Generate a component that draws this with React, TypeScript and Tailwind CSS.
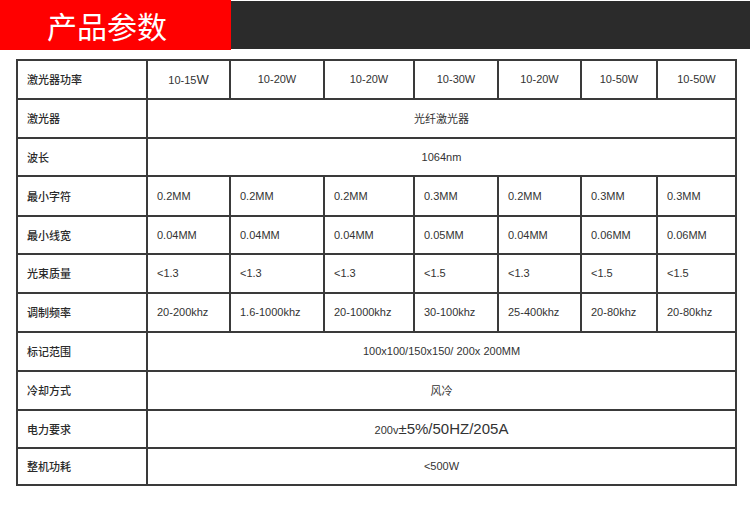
const widths = [130, 83, 94, 90, 84, 83, 76, 79];
const heights = [39, 39, 38, 40, 38, 39, 39, 39, 39, 38, 37];

const latin = "font-['Liberation_Sans','Noto_Sans_CJK_SC',sans-serif]";
const cjk = "font-['Noto_Sans_CJK_SC',sans-serif]";

type Row = { label: string; cells?: string[]; merged?: React.ReactNode };

const rows: Row[] = [
  { label: "激光器功率", cells: ["10-15W", "10-20W", "10-20W", "10-30W", "10-20W", "10-50W", "10-50W"] },
  { label: "激光器", merged: <span className={cjk}>光纤激光器</span> },
  { label: "波长", merged: "1064nm" },
  { label: "最小字符", cells: ["0.2MM", "0.2MM", "0.2MM", "0.3MM", "0.2MM", "0.3MM", "0.3MM"] },
  { label: "最小线宽", cells: ["0.04MM", "0.04MM", "0.04MM", "0.05MM", "0.04MM", "0.06MM", "0.06MM"] },
  { label: "光束质量", cells: ["<1.3", "<1.3", "<1.3", "<1.5", "<1.3", "<1.5", "<1.5"] },
  {
    label: "调制频率",
    cells: ["20-200khz", "1.6-1000khz", "20-1000khz", "30-100khz", "25-400khz", "20-80khz", "20-80khz"],
  },
  { label: "标记范围", merged: "100x100/150x150/ 200x 200MM" },
  { label: "冷却方式", merged: <span className={cjk}>风冷</span> },
  {
    label: "电力要求",
    merged: (
      <span>
        200v<span className="text-[15px]">±5%/50HZ/205A</span>
      </span>
    ),
  },
  { label: "整机功耗", merged: "<500W" },
];

export default function App() {
  return (
    <div className="h-[506px] w-[750px] bg-white">
      <div className="flex h-[50px]">
        <div className="flex w-[231px] items-center bg-[#ff0000] pl-[47px]">
          <span className={`${cjk} text-[30px] leading-none text-white`}>产品参数</span>
        </div>
        <div className="mt-px mb-px flex-1 bg-[#2b2b2b]" />
      </div>
      <table className={`ml-[16px] mt-[9px] table-fixed border-collapse ${latin} text-[11px] text-[#333]`}>
        <colgroup>
          {widths.map((w, i) => (
            <col key={i} style={{ width: w }} />
          ))}
        </colgroup>
        <tbody>
          {rows.map((row, r) => (
            <tr key={row.label} style={{ height: heights[r] }}>
              <td className={`border-2 border-[#3a3a3a] pl-[9px] ${cjk} font-medium text-[#2a2a2a]`}>{row.label}</td>
              {row.merged ? (
                <td colSpan={7} className="border-2 border-[#3a3a3a] text-center">
                  {row.merged}
                </td>
              ) : (
                row.cells!.map((c, i) => (
                  <td
                    key={i}
                    className={`border-2 border-[#3a3a3a] ${r === 0 ? "text-center" : "pl-[9px]"}`}
                  >
                    {r === 0 && i === 0 ? (
                      <span>
                        10-15<span className="text-[13px]">W</span>
                      </span>
                    ) : (
                      c
                    )}
                  </td>
                ))
              )}
            </tr>
          ))}
        </tbody>
      </table>
    </div>
  );
}
